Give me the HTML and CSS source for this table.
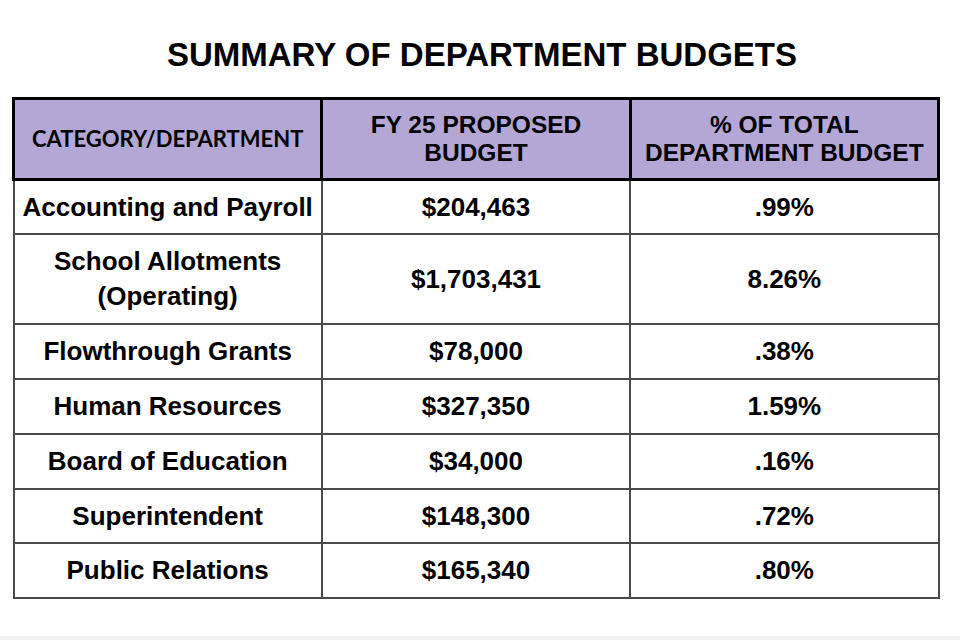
FILE: index.html
```html
<!DOCTYPE html>
<html lang="en">
<head>
<meta charset="utf-8">
<title>Summary of Department Budgets</title>
<link rel="stylesheet" href="styles.css">
</head>
<body>
<div class="page">
  <h1 class="title">SUMMARY OF DEPARTMENT BUDGETS</h1>
  <table class="budget">
    <thead>
      <tr class="head-row">
        <th class="h-cat">CATEGORY/DEPARTMENT</th>
        <th>FY 25 PROPOSED<br>BUDGET</th>
        <th>% OF TOTAL<br>DEPARTMENT BUDGET</th>
      </tr>
    </thead>
    <tbody>
      <tr class="row short"><td>Accounting and Payroll</td><td>$204,463</td><td>.99%</td></tr>
      <tr class="row tall"><td>School Allotments<br>(Operating)</td><td>$1,703,431</td><td>8.26%</td></tr>
      <tr class="row"><td>Flowthrough Grants</td><td>$78,000</td><td>.38%</td></tr>
      <tr class="row"><td>Human Resources</td><td>$327,350</td><td>1.59%</td></tr>
      <tr class="row"><td>Board of Education</td><td>$34,000</td><td>.16%</td></tr>
      <tr class="row short"><td>Superintendent</td><td>$148,300</td><td>.72%</td></tr>
      <tr class="row"><td>Public Relations</td><td>$165,340</td><td>.80%</td></tr>
    </tbody>
  </table>
  <div class="footer-strip"></div>
</div>
</body>
</html>
```

FILE: styles.css
```css
html, body {
  margin: 0;
  padding: 0;
  background: #ffffff;
}

.page {
  width: 960px;
  height: 640px;
  display: flex;
  flex-direction: column;
  font-family: "Liberation Sans", Arial, sans-serif;
  color: #000;
  overflow: hidden;
}

.title {
  margin: 36px 0 0 4px;
  font-size: 33px;
  line-height: 38px;
  font-weight: 700;
  text-align: center;
  letter-spacing: 0;
}

.budget {
  margin: 23px 0 0 12px;
  width: 928px;
  border-collapse: collapse;
  table-layout: fixed;
}

.budget th,
.budget td {
  width: 33.333%;
  padding: 0;
  text-align: center;
  vertical-align: middle;
  font-weight: 700;
}

.budget th {
  background: #b4a7d6;
  border: 3px solid #000;
  font-size: 24.5px;
  line-height: 28px;
  height: 78px;
}

.budget th.h-cat {
  font-family: Lato, "Open Sans", sans-serif;
  font-size: 22px;
  font-weight: 700;
}

.budget td {
  border: 2px solid #4a4a4a;
  font-size: 26px;
  line-height: 35px;
  height: 53px;
}

.budget tr.short td {
  height: 52px;
}

.budget tr.tall td {
  height: 88px;
}

.footer-strip {
  margin-top: auto;
  height: 4px;
  background: #f1f1f1;
}
```
